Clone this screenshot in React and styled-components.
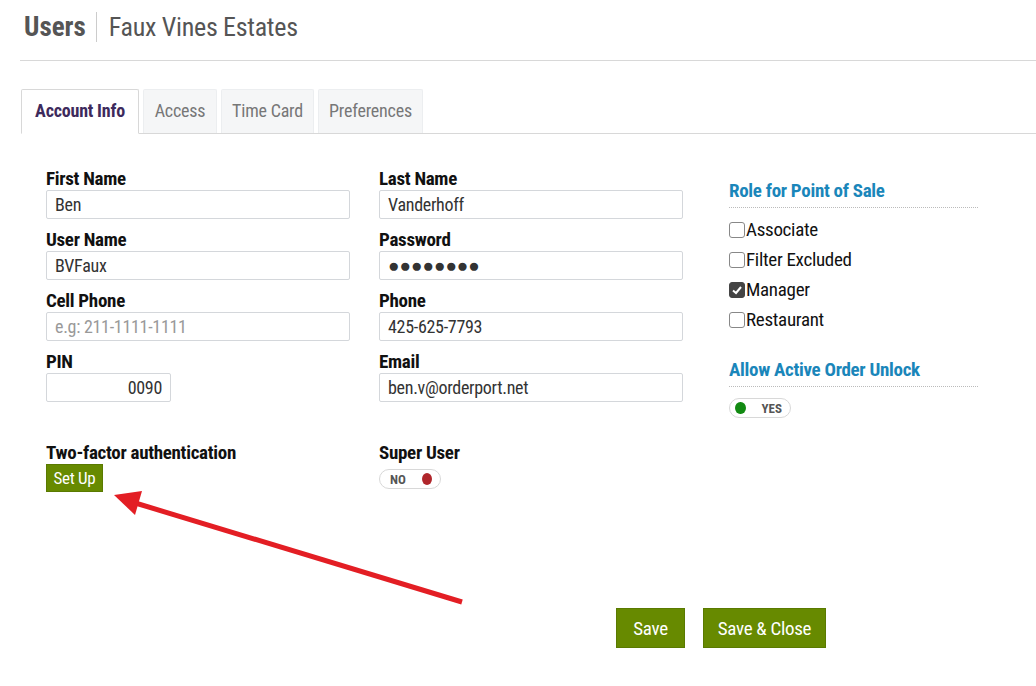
import styled, { createGlobalStyle } from "styled-components";

const GlobalStyle = createGlobalStyle`
  html, body {
    margin: 0;
    padding: 0;
    background: #fff;
  }
  body {
    font-family: "Roboto Condensed", "Roboto", "Liberation Sans", sans-serif;
    color: #111;
  }
`;

const Page = styled.div`
  position: relative;
  width: 1036px;
  height: 686px;
  overflow: hidden;
`;

const Header = styled.div`
  display: flex;
  align-items: center;
  height: 61px;
  margin-left: 20px;
  padding-left: 4px;
  border-bottom: 1px solid #d8d8d8;
  box-sizing: border-box;
  padding-bottom: 6px;
`;

const HeaderTitle = styled.span`
  font-size: 27px;
  font-weight: 700;
  color: #555;
  padding-right: 10px;
  border-right: 1px solid #ccc;
  line-height: 30px;
`;

const HeaderSub = styled.span`
  font-size: 26px;
  color: #555;
  padding-left: 12px;
  line-height: 30px;
  letter-spacing: -0.3px;
`;

const Tabs = styled.div`
  display: flex;
  gap: 4px;
  margin: 28px 0 0 21px;
  border-bottom: 1px solid #d8d8d8;
  height: 44px;
`;

const Tab = styled.div`
  display: flex;
  align-items: center;
  justify-content: center;
  width: ${(p) => p.$w}px;
  font-size: 18px;
  letter-spacing: -0.2px;
  color: ${(p) => (p.$active ? "#3d2a5c" : "#777")};
  font-weight: ${(p) => (p.$active ? 700 : 400)};
  background: ${(p) => (p.$active ? "#fff" : "#f5f6f7")};
  border: 1px solid ${(p) => (p.$active ? "#d8d8d8" : "#eceef0")};
  border-bottom: ${(p) => (p.$active ? "1px solid #fff" : "none")};
  height: ${(p) => (p.$active ? 45 : 44)}px;
  box-sizing: border-box;
  border-radius: 2px 2px 0 0;
  padding-bottom: 3px;
`;

const Body = styled.div`
  display: flex;
  padding: 34px 0 0 46px;
`;

const Column = styled.div`
  display: flex;
  flex-direction: column;
  width: ${(p) => p.$w}px;
  margin-right: ${(p) => p.$mr || 0}px;
`;

const Field = styled.div`
  display: flex;
  flex-direction: column;
  margin-bottom: 10px;
  margin-top: ${(p) => p.$mt || 0}px;
`;

const Label = styled.label`
  font-size: 19px;
  font-weight: 700;
  color: #111;
  line-height: 22px;
  letter-spacing: -0.3px;
`;

const Input = styled.div`
  height: 29px;
  width: ${(p) => p.$w || 304}px;
  box-sizing: border-box;
  border: 1px solid #d4d7db;
  border-radius: 2px;
  padding: 0 8px;
  display: flex;
  align-items: center;
  justify-content: ${(p) => (p.$right ? "flex-end" : "flex-start")};
  font-size: ${(p) => (p.$dots ? 19 : 18)}px;
  color: ${(p) => (p.$placeholder ? "#999" : "#333")};
  letter-spacing: ${(p) => (p.$dots ? "0" : "-0.3px")};
`;

const SmallButton = styled.button`
  background: #678a00;
  color: #fff;
  border: 1px solid #5a7a00;
  font-family: inherit;
  font-size: 17px;
  letter-spacing: -0.3px;
  height: 28px;
  width: 57px;
  padding: 0;
  margin-top: 0;
`;

const Toggle = styled.div`
  display: flex;
  align-items: center;
  justify-content: ${(p) => (p.$on ? "flex-start" : "space-between")};
  gap: 16px;
  width: ${(p) => p.$w}px;
  height: 20px;
  box-sizing: border-box;
  border: 1px solid #d8d8d8;
  border-radius: 10px;
  padding: 0 8px 0 ${(p) => (p.$on ? 5 : 10)}px;
  margin-top: ${(p) => p.$mt || 0}px;
  font-size: 13px;
  font-weight: 700;
  color: #555;
`;

const Dot = styled.span`
  width: 12px;
  height: 12px;
  border-radius: 50%;
  background: ${(p) => p.$color};
`;

const SectionTitle = styled.div`
  font-size: 19px;
  font-weight: 700;
  color: #1a86ba;
  padding-bottom: 5px;
  border-bottom: 1px dotted #bbb;
  margin-top: ${(p) => p.$mt || 0}px;
  line-height: 22px;
  letter-spacing: -0.3px;
`;

const CheckList = styled.div`
  display: flex;
  flex-direction: column;
  gap: 8px;
  margin-top: 11px;
`;

const CheckRow = styled.div`
  display: flex;
  align-items: center;
  font-size: 19px;
  line-height: 22px;
  letter-spacing: -0.3px;
  color: #111;
`;

const Box = styled.span`
  width: 16px;
  height: 16px;
  box-sizing: border-box;
  border: 1px solid ${(p) => (p.$checked ? "#444" : "#888")};
  background: ${(p) => (p.$checked ? "#444" : "#fff")};
  border-radius: 3px;
  margin-right: 1px;
  display: flex;
  align-items: center;
  justify-content: center;
`;

const Footer = styled.div`
  display: flex;
  gap: 18px;
  margin: 0 0 0 616px;
  position: absolute;
  top: 608px;
  left: 0;
`;

const BigButton = styled.button`
  background: #678a00;
  color: #fff;
  border: 1px solid #5a7a00;
  font-family: inherit;
  font-size: 19px;
  letter-spacing: -0.3px;
  height: 40px;
  width: ${(p) => p.$w}px;
  padding: 0;
`;

const Arrow = styled.svg`
  position: absolute;
  left: 0;
  top: 0;
  pointer-events: none;
`;

const roles = [
  { name: "Associate" },
  { name: "Filter Excluded" },
  { name: "Manager", checked: true },
  { name: "Restaurant" },
];

export default function App() {
  return (
    <Page>
      <GlobalStyle />
      <Header>
        <HeaderTitle>Users</HeaderTitle>
        <HeaderSub>Faux Vines Estates</HeaderSub>
      </Header>
      <Tabs>
        <Tab $active $w={118}>Account Info</Tab>
        <Tab $w={74}>Access</Tab>
        <Tab $w={93}>Time Card</Tab>
        <Tab $w={105}>Preferences</Tab>
      </Tabs>
      <Body>
        <Column $w={304} $mr={29}>
          <Field>
            <Label>First Name</Label>
            <Input>Ben</Input>
          </Field>
          <Field>
            <Label>User Name</Label>
            <Input>BVFaux</Input>
          </Field>
          <Field>
            <Label>Cell Phone</Label>
            <Input $placeholder>e.g: 211-1111-1111</Input>
          </Field>
          <Field>
            <Label>PIN</Label>
            <Input $w={125} $right>0090</Input>
          </Field>
          <Field $mt={30}>
            <Label>Two-factor authentication</Label>
            <SmallButton>Set Up</SmallButton>
          </Field>
        </Column>
        <Column $w={304} $mr={46}>
          <Field>
            <Label>Last Name</Label>
            <Input>Vanderhoff</Input>
          </Field>
          <Field>
            <Label>Password</Label>
            <Input $dots>●●●●●●●●</Input>
          </Field>
          <Field>
            <Label>Phone</Label>
            <Input>425-625-7793</Input>
          </Field>
          <Field>
            <Label>Email</Label>
            <Input>ben.v@orderport.net</Input>
          </Field>
          <Field $mt={30}>
            <Label>Super User</Label>
            <Toggle $w={62} $mt={5}>
              NO
              <Dot $color="#b0262b" />
            </Toggle>
          </Field>
        </Column>
        <Column $w={249}>
          <SectionTitle $mt={12}>Role for Point of Sale</SectionTitle>
          <CheckList>
            {roles.map((r) => (
              <CheckRow key={r.name}>
                <Box $checked={r.checked}>
                  {r.checked && (
                    <svg width="12" height="12" viewBox="0 0 12 12">
                      <path d="M2 6.5 L5 9 L10 3" fill="none" stroke="#fff" strokeWidth="2" />
                    </svg>
                  )}
                </Box>
                {r.name}
              </CheckRow>
            ))}
          </CheckList>
          <SectionTitle $mt={28}>Allow Active Order Unlock</SectionTitle>
          <Toggle $w={62} $on $mt={11}>
            <Dot $color="#128a12" />
            YES
          </Toggle>
        </Column>
      </Body>
      <Footer>
        <BigButton $w={69}>Save</BigButton>
        <BigButton $w={123}>Save &amp; Close</BigButton>
      </Footer>
      <Arrow width="1036" height="686">
        <line x1="462" y1="602" x2="132" y2="502" stroke="#e31e24" strokeWidth="5" />
        <polygon points="114,495 142,491 135,515" fill="#e31e24" />
      </Arrow>
    </Page>
  );
}
